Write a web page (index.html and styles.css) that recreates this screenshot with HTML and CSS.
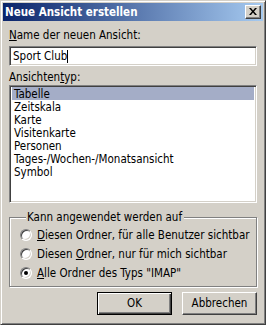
FILE: index.html
```html
<!DOCTYPE html>
<html lang="de">
<head>
    <meta charset="UTF-8">
    <title>Neue Ansicht erstellen</title>
    <link rel="stylesheet" href="styles.css">
</head>
<body>
    <div class="window">
        <!-- Title bar -->
        <div class="titlebar">
            <span class="title">Neue Ansicht erstellen</span>
            <span class="close">
                <svg width="8" height="7" viewBox="0 0 8 7">
                    <path d="M0 0h2l2 2.5 2-2.5h2l-3 3.5 3 3.5h-2l-2-2.5-2 2.5h-2l3-3.5z" fill="#000"/>
                </svg>
            </span>
        </div>

        <div class="content">
            <label class="label" for="name"><u>N</u>ame der neuen Ansicht:</label>
            <div class="edit" id="name">Sport Club<span class="caret"></span></div>

            <label class="label label-type">Ansichten<u>t</u>yp:</label>
            <ul class="listbox">
                <li class="selected">Tabelle</li>
                <li>Zeitskala</li>
                <li>Karte</li>
                <li>Visitenkarte</li>
                <li>Personen</li>
                <li>Tages-/Wochen-/Monatsansicht</li>
                <li>Symbol</li>
            </ul>

            <fieldset class="group">
                <legend>Kann angewendet werden auf</legend>
                <div class="option"><span class="radio"></span><span><u>D</u>iesen Ordner, für alle Benutzer sichtbar</span></div>
                <div class="option"><span class="radio"></span><span>Diesen <u>O</u>rdner, nur für mich sichtbar</span></div>
                <div class="option"><span class="radio checked"></span><span><u>A</u>lle Ordner des Typs "IMAP"</span></div>
            </fieldset>

            <div class="buttons">
                <div class="button default"><span>OK</span></div>
                <div class="button"><span>Abbrechen</span></div>
            </div>
        </div>
    </div>
</body>
</html>
```

FILE: styles.css
```css
 * {
   margin: 0;
   padding: 0;
   box-sizing: border-box;
 }
 body {
     font-family: 'DejaVu Sans', 'Liberation Sans', sans-serif;
     font-stretch: condensed;
     font-size: 11.5px;
     line-height: 13px;
     color: #000;
     background-color: #d4d0c8;
 }

 /* Window frame */
 .window {
     width: 266px;
     height: 325px;
     background-color: #d4d0c8;
     border: 1px solid;
     border-color: #d4d0c8 #404040 #404040 #d4d0c8;
     box-shadow: inset 1px 1px #fff, inset -1px -1px #808080;
     padding: 2px;
 }
 .titlebar {
     height: 18px;
     background: linear-gradient(to right, #0a246a, #a6caf0);
     display: flex;
     align-items: center;
     justify-content: space-between;
     padding: 0 2px 0 2px;
 }
 .title {
     color: #fff;
     font-weight: bold;
 }
 .close {
     width: 16px;
     height: 14px;
     background-color: #d4d0c8;
     border: 1px solid;
     border-color: #fff #404040 #404040 #fff;
     box-shadow: inset -1px -1px #808080;
     display: flex;
     align-items: center;
     justify-content: center;
     padding: 0 1px 1px 0;
 }

 /* Dialog body */
 .content {
     padding: 8px 6px 0 6px;
 }
 .label {
     display: block;
     height: 13px;
 }
 .label-type {
     margin-top: 5px;
 }
 .edit {
     margin-top: 4px;
     height: 20px;
     background-color: #fff;
     border: 1px solid;
     border-color: #808080 #fff #fff #808080;
     box-shadow: inset 1px 1px #404040, inset -1px -1px #d4d0c8;
     padding: 3px 3px;
     display: flex;
     align-items: center;
 }
 .caret {
     display: inline-block;
     width: 1px;
     height: 13px;
     background-color: #000;
 }

 .listbox {
     list-style: none;
     margin-top: 1px;
     height: 118px;
     background-color: #fff;
     border: 1px solid;
     border-color: #808080 #fff #fff #808080;
     box-shadow: inset 1px 1px #404040, inset -1px -1px #d4d0c8;
     padding: 1px 2px;
 }
 .listbox li {
     height: 13px;
     line-height: 14px;
     padding-left: 2px;
 }
 .listbox li.selected {
     background-color: #a4adc7;
 }

 /* Group box */
 .group {
     margin-top: 8px;
     height: 76px;
     border: 1px solid #808080;
     box-shadow: inset 1px 1px #fff, 1px 1px #fff;
     padding: 2px 0 0 10px;
 }
 .group legend {
     margin-left: 6px;
     padding: 0 2px 0 1px;
     background-color: #d4d0c8;
 }
 .option {
     display: flex;
     align-items: center;
     gap: 4px;
     height: 18px;
     margin-bottom: 1px;
 }
 .radio {
     width: 12px;
     height: 12px;
     border-radius: 50%;
     background-color: #fff;
     border: 1px solid;
     border-color: #808080 #fff #fff #808080;
     box-shadow: inset 1px 1px #404040, inset -1px -1px #d4d0c8;
     display: flex;
     align-items: center;
     justify-content: center;
     margin-right: 1px;
 }
 .radio.checked::after {
     content: "";
     width: 4px;
     height: 4px;
     border-radius: 50%;
     background-color: #000;
 }

 /* Buttons */
 .buttons {
     display: flex;
     justify-content: flex-end;
     gap: 10px;
     margin-top: 5px;
 }
 .button {
     width: 75px;
     height: 23px;
     border: 1px solid;
     border-color: #fff #404040 #404040 #fff;
     box-shadow: inset -1px -1px #808080;
     display: flex;
     align-items: center;
     justify-content: center;
 }
 .button.default {
     border: 1px solid #000;
     box-shadow: inset 1px 1px #fff, inset -1px -1px #404040, inset -2px -2px #808080;
 }
```
